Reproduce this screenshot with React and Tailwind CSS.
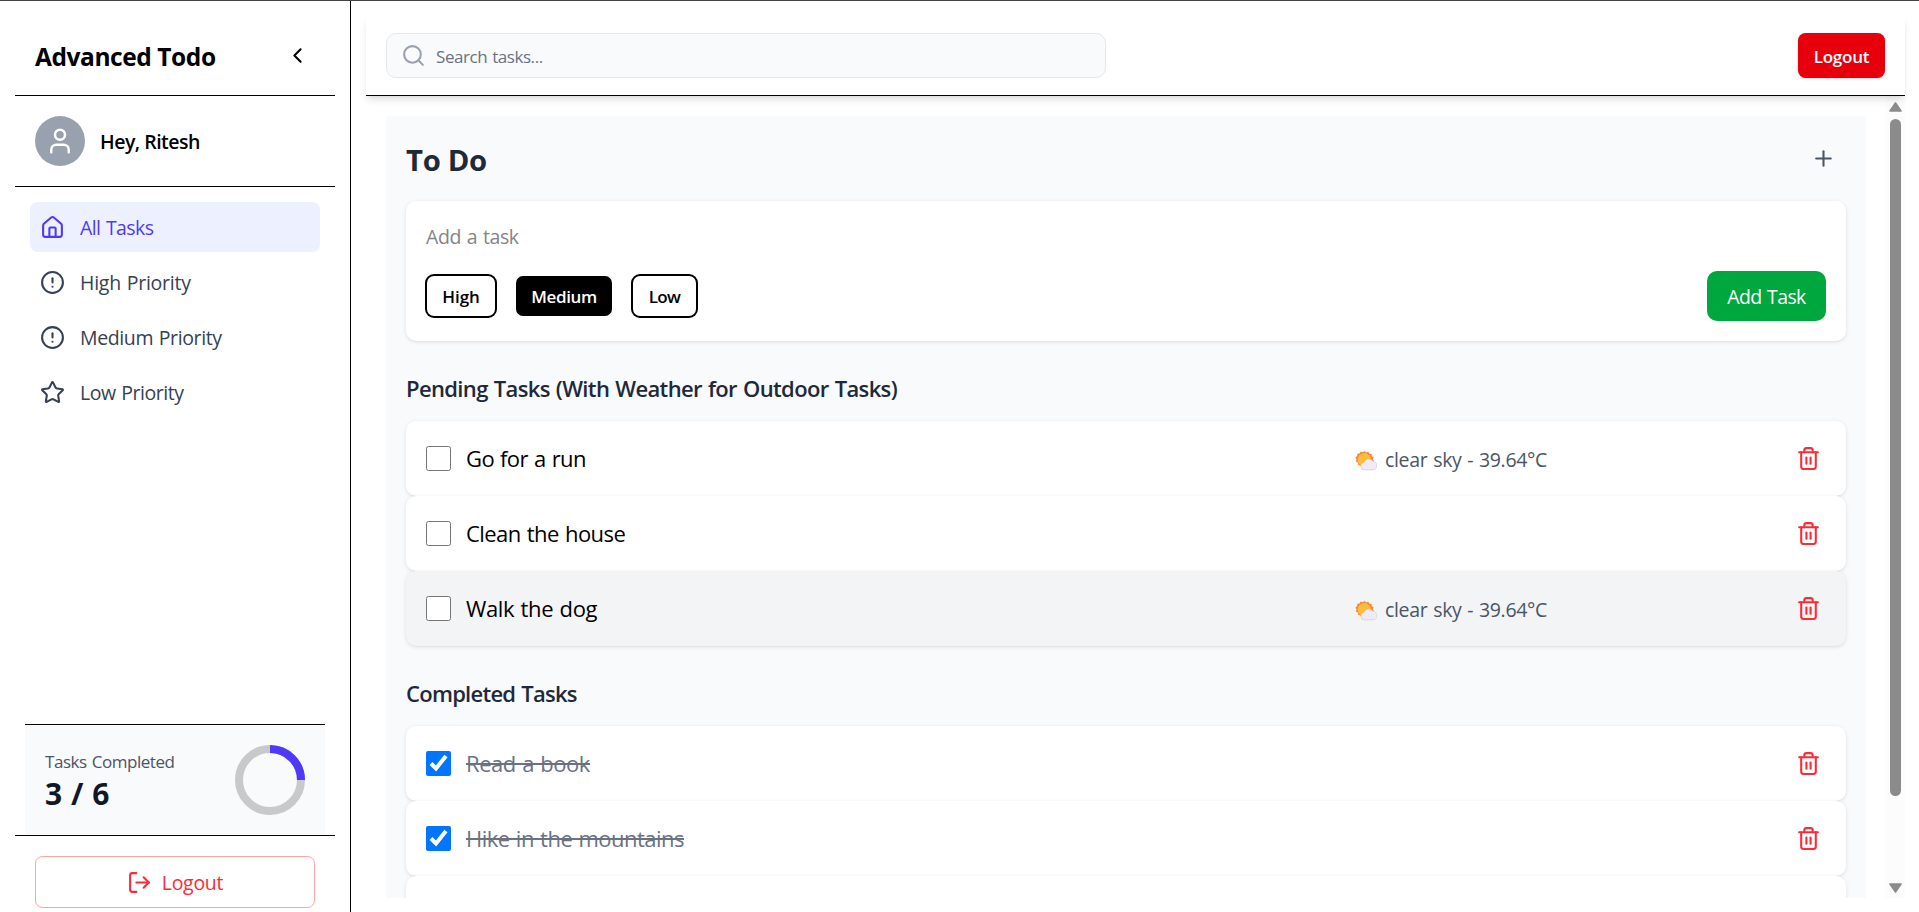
import {
  ChevronLeft,
  CircleAlert,
  House,
  LogOut,
  Plus,
  Search,
  Star,
  Trash2,
  User,
} from "lucide-react";

const navItems = [
  { label: "All Tasks", icon: House, active: true, tracking: "tracking-[-0.58px]" },
  { label: "High Priority", icon: CircleAlert, tracking: "tracking-[-0.24px]" },
  { label: "Medium Priority", icon: CircleAlert, tracking: "tracking-[-0.38px]" },
  { label: "Low Priority", icon: Star, tracking: "tracking-[-0.45px]" },
];

const pending = [
  { title: "Go for a run", weather: "clear sky - 39.64°C", tracking: "tracking-[-0.62px]" },
  { title: "Clean the house", tracking: "tracking-[-0.56px]" },
  { title: "Walk the dog", weather: "clear sky - 39.64°C", hovered: true, tracking: "tracking-[-0.36px]" },
];

const completed = [
  { title: "Read a book", tracking: "tracking-[-0.44px]" },
  { title: "Hike in the mountains", tracking: "tracking-[-0.51px]" },
];

function WeatherIcon() {
  return (
    <svg className="h-5 w-[23px]" viewBox="0 0 23 20">
      <path
        d="M9.5 0l1.7 1.5 2.2-.8.9 2 2.3.2.1 2.3 2 1.1-.8 2.1 1.3 1.9-1.7 1.5.1 2.3-2.2.5-1 2-2.2-.5-1.9 1.2-1.7-1.5-2.2.6-1-2-2.3-.3v-2.3L.8 10.600l.8-2.100L.4 6.500l1.800-1.400.1-2.300 2.300-.3 1.100-2 2.100.7z"
        fill="#fb8531"
      />
      <circle cx="9.300" cy="8.800" r="6.700" fill="#fbbd3c" />
      <path d="M9.500 19.300a4 4 0 0 1-.6-7.900 5.200 5.200 0 0 1 9.200-1.300 4.700 4.700 0 0 1 .4 9.200z" fill="#d3cbdc" />
      <path d="M9.500 18.600a3.500 3.500 0 0 1-.3-6.900 5 5 0 0 1 8.700-1.200 4.100 4.100 0 0 1 .4 8.100z" fill="#f0eaf6" />
    </svg>
  );
}

function TaskRow({ title, weather, hovered, done, tracking }) {
  return (
    <li
      className={`flex h-[75px] items-center rounded-[10px] pr-[25px] pl-5 shadow-[0_1px_4px_rgba(0,0,0,0.1),0_1px_2px_-1px_rgba(0,0,0,0.1)] ${
        hovered ? "bg-gray-100" : "bg-white"
      }`}
    >
      <input type="checkbox" defaultChecked={done} className="size-[25px]" />
      <span
        className={`ml-[15px] pb-px text-[22px] leading-[35px] [word-spacing:1px] ${tracking} ${
          done ? "text-gray-500 line-through decoration-2" : "text-black"
        }`}
      >
        {title}
      </span>
      <div className="ml-auto flex items-center">
        {weather && (
          <div className="mr-[250px] flex items-center gap-[7px] text-gray-600">
            <div className="pt-1">
              <WeatherIcon />
            </div>
            <span className="w-[161px] pt-0.5 text-[19.5px] leading-[30px] tracking-[-0.32px] whitespace-nowrap [word-spacing:1px]">
              {weather}
            </span>
          </div>
        )}
        <Trash2 size={25} className="text-[#fb2c36]" />
      </div>
    </li>
  );
}

function Sidebar() {
  return (
    <aside className="flex w-[351px] shrink-0 flex-col border-r border-black px-[15px] pt-[15px]">
      <div className="flex h-20 items-center justify-between border-b border-black pr-[25px] pl-5">
        <h1 className="pt-0.5 text-[24.5px] leading-[35px] font-bold tracking-[-0.43px]">Advanced Todo</h1>
        <ChevronLeft size={25} />
      </div>
      <div className="flex h-[91px] items-center gap-[15px] border-b border-black pl-5">
        <div className="flex size-[50px] items-center justify-center rounded-full bg-[#99a1af] text-white">
          <User size={30} />
        </div>
        <span className="pt-0.5 text-[19.5px] leading-[30px] font-[560] tracking-[-0.5px]">Hey, Ritesh</span>
      </div>
      <nav className="flex flex-col gap-[5px] p-[15px]">
        {navItems.map(({ label, icon: Icon, active, tracking }) => (
          <a
            key={label}
            className={`flex h-[50px] items-center gap-[15px] rounded-[7.5px] px-2.5 ${
              active ? "bg-[#edf1ff] text-[#4f39f6]" : "text-[#364153]"
            }`}
          >
            <Icon size={25} />
            <span className={`pt-px text-[19.5px] leading-[30px] [word-spacing:1px] ${tracking}`}>{label}</span>
          </a>
        ))}
      </nav>
      <div className="mx-2.5 mt-auto flex h-[111px] items-center justify-between border-t border-black bg-gray-50 px-5">
        <div className="flex flex-col pt-[3px]">
          <span className="text-[17px] leading-[25px] tracking-[-0.45px] text-gray-600 [word-spacing:1px]">
            Tasks Completed
          </span>
          <span className="text-[30px] leading-10 font-bold tracking-[0.55px] text-gray-900">3 / 6</span>
        </div>
        <svg className="size-[70px]" viewBox="0 0 70 70" fill="none" strokeWidth="8">
          <circle cx="35" cy="35" r="31" stroke="#c8c9ca" />
          <path d="M35 4a31 31 0 0 1 31 31" stroke="#4f39f6" />
        </svg>
      </div>
      <div className="border-t border-black px-5 pt-5 pb-1">
        <button className="flex h-[52px] w-full items-center justify-center gap-2.5 rounded-[7.5px] border border-[#ffa2a2] text-[#fb2c36]">
          <LogOut size={25} />
          <span className="pt-px text-[19.5px] leading-[30px] tracking-[-0.28px]">Logout</span>
        </button>
      </div>
    </aside>
  );
}

function Header() {
  return (
    <header className="z-10 flex h-20 shrink-0 items-center justify-between border-b border-black bg-white px-5 shadow-[0_5px_7.5px_-1.25px_rgba(0,0,0,0.1),0_2.5px_5px_-2.5px_rgba(0,0,0,0.1)]">
      <div className="flex h-[45px] w-[720px] items-center gap-2.5 rounded-[10px] border border-gray-200 bg-gray-50 px-[14px]">
        <Search size={25} className="text-[#99a1af]" />
        <span className="pt-0.5 text-[17px] leading-[25px] tracking-[-0.44px] text-gray-500 [word-spacing:1px]">
          Search tasks...
        </span>
      </div>
      <button className="h-[45px] w-[87px] rounded-[7.5px] bg-[#e7000b] pt-0.5 text-[17px] font-[600] tracking-[-0.22px] text-white shadow-[0_1px_3px_rgba(0,0,0,0.15)]">
        Logout
      </button>
    </header>
  );
}

function AddTaskCard() {
  return (
    <div className="mt-[15px] flex h-[140px] flex-col rounded-[10px] bg-white px-5 pt-5 pb-5 shadow-[0_1px_4px_rgba(0,0,0,0.1),0_1px_2px_-1px_rgba(0,0,0,0.1)]">
      <span className="pt-px text-[19.5px] leading-[30px] tracking-[-0.38px] text-[#858585] [word-spacing:1px]">
        Add a task
      </span>
      <div className="mt-auto flex items-center justify-between">
        <div className="ml-px flex gap-[21px] pb-px text-[17px] font-[600]">
          <button className="h-10 w-[68px] rounded-[7px] bg-white pt-[3px] ring-2 ring-black">High</button>
          <button className="h-10 w-24 rounded-[7px] bg-black pt-[3px] tracking-[-0.4px] text-white">Medium</button>
          <button className="h-10 w-[63px] rounded-[7px] bg-white pt-[3px] tracking-[-0.6px] ring-2 ring-black">Low</button>
        </div>
        <button className="h-[50px] w-[119px] rounded-[10px] bg-[#00a63e] pt-px text-[19.5px] tracking-[-0.62px] text-white [word-spacing:1px]">
          Add Task
        </button>
      </div>
    </div>
  );
}

function Scrollbar() {
  return (
    <div className="flex w-[19px] shrink-0 flex-col items-center bg-[#fcfcfc] pt-[6px] pb-1">
      <svg className="h-[10px] w-[13px]" viewBox="0 0 13 10">
        <path d="M6.500 1L12 9H1z" fill="#8b8b8b" stroke="#8b8b8b" strokeWidth="1.600" strokeLinejoin="round" />
      </svg>
      <div className="mt-[7px] h-[677px] w-[11px] rounded-full bg-[#8b8b8b]" />
      <svg className="mt-auto mb-[1px] h-[10px] w-[13px]" viewBox="0 0 13 10">
        <path d="M6.500 9L12 1H1z" fill="#8b8b8b" stroke="#8b8b8b" strokeWidth="1.600" strokeLinejoin="round" />
      </svg>
    </div>
  );
}

export default function App() {
  return (
    <div className="flex h-screen w-full overflow-hidden border-t border-[#444444] bg-white font-['Open_Sans','Noto_Sans',sans-serif] text-black">
      <Sidebar />
      <main className="flex min-w-0 flex-1 flex-col pt-[15px] pr-[14px] pb-[14px] pl-[15px]">
        <Header />
        <div className="flex min-h-0 flex-1">
          <div className="min-w-0 flex-1 overflow-hidden px-5 pt-5">
            <section className="h-[900px] bg-gray-50 p-5">
              <div className="flex h-[50px] items-center justify-between">
                <h2 className="pb-0.5 text-[29.25px] leading-10 font-bold tracking-[-0.3px] text-gray-800">To Do</h2>
                <Plus size={25} className="mr-2.5 -mt-[5px] text-gray-600" />
              </div>
              <AddTaskCard />
              <h3 className="mt-[30px] text-[22px] leading-[35px] font-[560] tracking-[-0.64px] text-gray-800 [word-spacing:1px]">
                Pending Tasks (With Weather for Outdoor Tasks)
              </h3>
              <ul className="mt-[15px]">
                {pending.map((task) => (
                  <TaskRow key={task.title} {...task} />
                ))}
              </ul>
              <h3 className="mt-[30px] text-[22px] leading-[35px] font-[560] tracking-[-0.74px] text-gray-800 [word-spacing:1px]">
                Completed Tasks
              </h3>
              <ul className="mt-[15px]">
                {completed.map((task) => (
                  <TaskRow key={task.title} {...task} done />
                ))}
                <li className="h-[75px] rounded-[10px] bg-white shadow-[0_1px_4px_rgba(0,0,0,0.1)]" />
              </ul>
            </section>
          </div>
          <Scrollbar />
        </div>
      </main>
    </div>
  );
}
